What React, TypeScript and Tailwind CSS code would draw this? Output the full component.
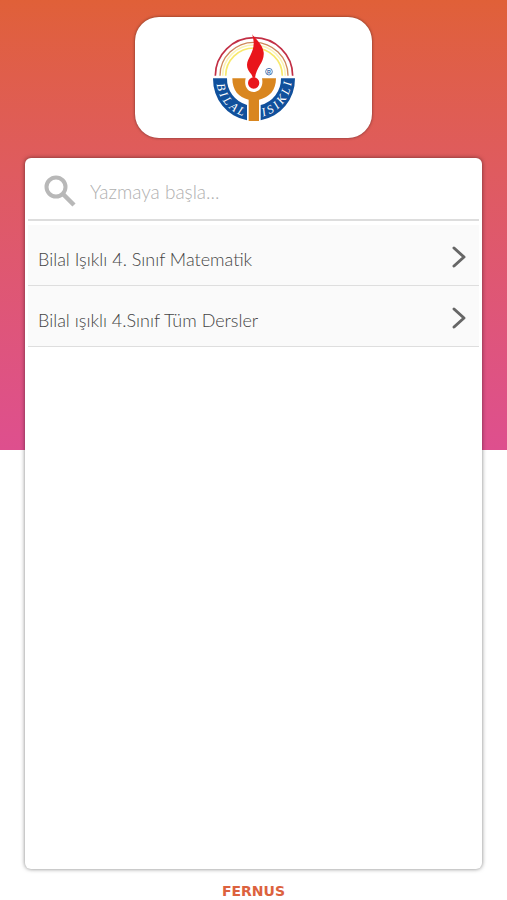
const LESSONS = [
  { id: 1, title: "Bilal Işıklı 4. Sınıf Matematik", href: "#matematik" },
  { id: 2, title: "Bilal ışıklı 4.Sınıf Tüm Dersler", href: "#tum-dersler" },
];

function BrandLogo() {
  return (
    <svg viewBox="0 0 315 315" className="h-[105px] w-[105px]" role="img" aria-label="Bilal Işıklı">
      <g fill="none">
        <path d="M43 152A116 114 0 0 1 275 152" stroke="#c22f45" strokeWidth="5" />
        <path d="M57 152A102 100 0 0 1 261 152" stroke="#cf8a5c" strokeWidth="4" />
        <path d="M65 152A94 92 0 0 1 253 152" stroke="#fbf3b4" strokeWidth="5" />
        <path d="M74 152A85 83 0 0 1 244 152" stroke="#f8e96c" strokeWidth="5" />
      </g>
      <path d="M36 160H78A81 81 0 0 0 138 240V286A123 126 0 0 1 36 160Z" fill="#10509c" />
      <path d="M282 160H240A81 81 0 0 1 179 240V286A123 126 0 0 0 282 160Z" fill="#10509c" />
      <path
        d="M94 160H134C128 184 140 201 158 201S188 184 183 160H225C225 196 205 218 174 224V288H143V224C113 218 94 196 94 160Z"
        fill="#d9861f"
      />
      <path
        d="M153 27C160 40 183 52 188 82C191 111 166 126 162 158H155C154 144 138 140 138 119C139 94 170 76 153 27Z"
        fill="#e9151b"
      />
      <circle cx="158" cy="174" r="17" fill="#e9151b" />
      <circle cx="204" cy="140" r="10" fill="none" stroke="#3568a8" strokeWidth="2.5" />
      <text x="204" y="146" textAnchor="middle" className="fill-[#3568a8] font-['Liberation_Sans'] text-[16px] font-bold">
        R
      </text>
      <defs>
        <path id="logoLeftArc" d="M46 160A113 117 0 0 0 143 277" />
        <path id="logoRightArc" d="M174 277A113 117 0 0 0 272 160" />
      </defs>
      <g className="fill-white font-['Liberation_Serif'] text-[36px] italic">
        <text textAnchor="middle">
          <textPath href="#logoLeftArc" startOffset="50%">B I L A L</textPath>
        </text>
        <text textAnchor="middle">
          <textPath href="#logoRightArc" startOffset="50%">I S I K L I</textPath>
        </text>
      </g>
    </svg>
  );
}

function SearchIcon() {
  return (
    <svg viewBox="0 0 32 32" className="h-8 w-8 shrink-0" fill="none" stroke="#b8b8b8" aria-hidden="true">
      <circle cx="12" cy="12" r="9.5" strokeWidth="4" />
      <path d="M19 19L30 30" strokeWidth="4.5" />
    </svg>
  );
}

function ChevronIcon() {
  return (
    <svg viewBox="0 0 16 24" className="mt-[3px] h-6 w-4 shrink-0" fill="none" aria-hidden="true">
      <path d="M3 3L13 12L3 21" stroke="#666666" strokeWidth="3" strokeLinecap="round" strokeLinejoin="round" />
    </svg>
  );
}

export default function App() {
  return (
    <div className="flex min-h-screen flex-col bg-white bg-linear-to-b from-[#e06038] to-[#de4f8e] bg-[length:100%_50%] bg-no-repeat px-[25px] pt-[17px] font-[Lato,'Noto_Sans',sans-serif]">
      <header className="mx-auto flex h-[121px] w-[52%] justify-center rounded-3xl bg-white pt-2 shadow-[0_0_3px_rgba(0,0,0,0.5)]">
        <BrandLogo />
      </header>

      <main className="mt-5 flex flex-1 flex-col rounded-md bg-white px-[3px] shadow-[0_0_4px_rgba(0,0,0,0.5)]">
        <label className="flex h-[63px] items-center border-b-2 border-[#dddddd] pt-1 pl-4">
          <SearchIcon />
          <input
            type="text"
            aria-label="Ders ara"
            placeholder="Yazmaya başla..."
            className="ml-[14px] min-w-0 flex-1 bg-transparent pt-1 text-[19px] font-light text-[#666666] outline-none placeholder:text-[#b0b0b0]"
          />
        </label>

        <ul className="mt-1">
          {LESSONS.map((lesson) => (
            <li key={lesson.id} className="border-b border-[#dedede] bg-[#fafafa]">
              <a href={lesson.href} className="flex h-[60px] items-center justify-between pr-3 pl-[10px] text-[18px] font-light text-[#444444]">
                <span className="pt-2">{lesson.title}</span>
                <ChevronIcon />
              </a>
            </li>
          ))}
        </ul>
      </main>

      <footer className="flex h-[31px] items-center justify-center pt-3 text-[14px] leading-4 font-bold text-[#dc623e] font-['DejaVu_Sans',sans-serif]">
        FERNUS
      </footer>
    </div>
  );
}
